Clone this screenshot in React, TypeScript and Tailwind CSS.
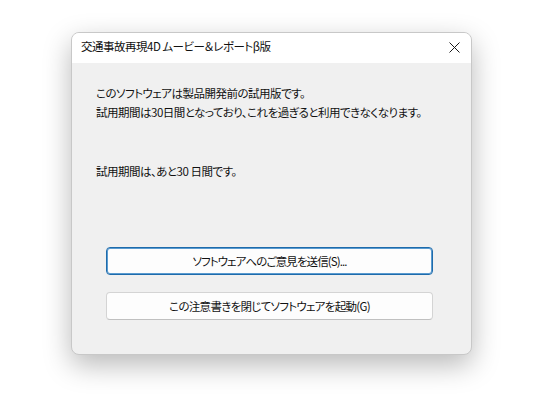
import React from "react";

export default function App() {
  const font = "[font-family:'Noto_Sans_CJK_JP','Noto_Sans',sans-serif] [font-feature-settings:'palt']";
  return (
    <div className={`w-[540px] h-[405px] bg-white pl-[71px] pt-[32px] ${font}`}>
      <div className="w-[401px] h-[323px] rounded-[8px] border border-[#c8c8c8] overflow-hidden flex flex-col shadow-[0_10px_28px_rgba(0,0,0,0.28)] bg-[#f0f0f0]">
        <div className="h-[30px] bg-white flex items-center justify-between pl-[9px] pr-[10px] shrink-0">
          <span className="text-[11.5px] tracking-[-0.5px] text-[#111] leading-none mt-[-2px]">交通事故再現4D ムービー＆レポートβ版</span>
          <svg width="11" height="11" viewBox="0 0 11 11" className="mr-[1px] mt-[-2px]">
            <path d="M0.5 0.5 L10.5 10.5 M10.5 0.5 L0.5 10.5" stroke="#1a1a1a" strokeWidth="1" fill="none" />
          </svg>
        </div>
        <div className="flex flex-col pl-[24px] pt-[21px] text-[11.5px] tracking-[-0.5px] leading-[19px] text-[#111]">
          <p>このソフトウェアは製品開発前の試用版です。</p>
          <p>試用期間は30日間となっており、これを過ぎると利用できなくなります。</p>
          <p className="mt-[40px]">試用期間は、あと30 日間です。</p>
          <div className="flex flex-col gap-[17px] mt-[66px] ml-[10px] w-[327px]">
            <button className="h-[28px] rounded-[4px] border border-[#1e6bab] shadow-[inset_0_0_0_1px_#5a9bd0] bg-[#fdfdfd] text-[11.5px] tracking-[-0.9px] text-[#111] flex items-center justify-center">
              ソフトウェアへのご意見を送信(S)...
            </button>
            <button className="h-[28px] rounded-[4px] border border-[#d4d4d4] border-b-[#c0c0c0] bg-[#fdfdfd] text-[11.5px] tracking-[-0.7px] text-[#111] flex items-center justify-center">
              この注意書きを閉じてソフトウェアを起動(G)
            </button>
          </div>
        </div>
      </div>
    </div>
  );
}
